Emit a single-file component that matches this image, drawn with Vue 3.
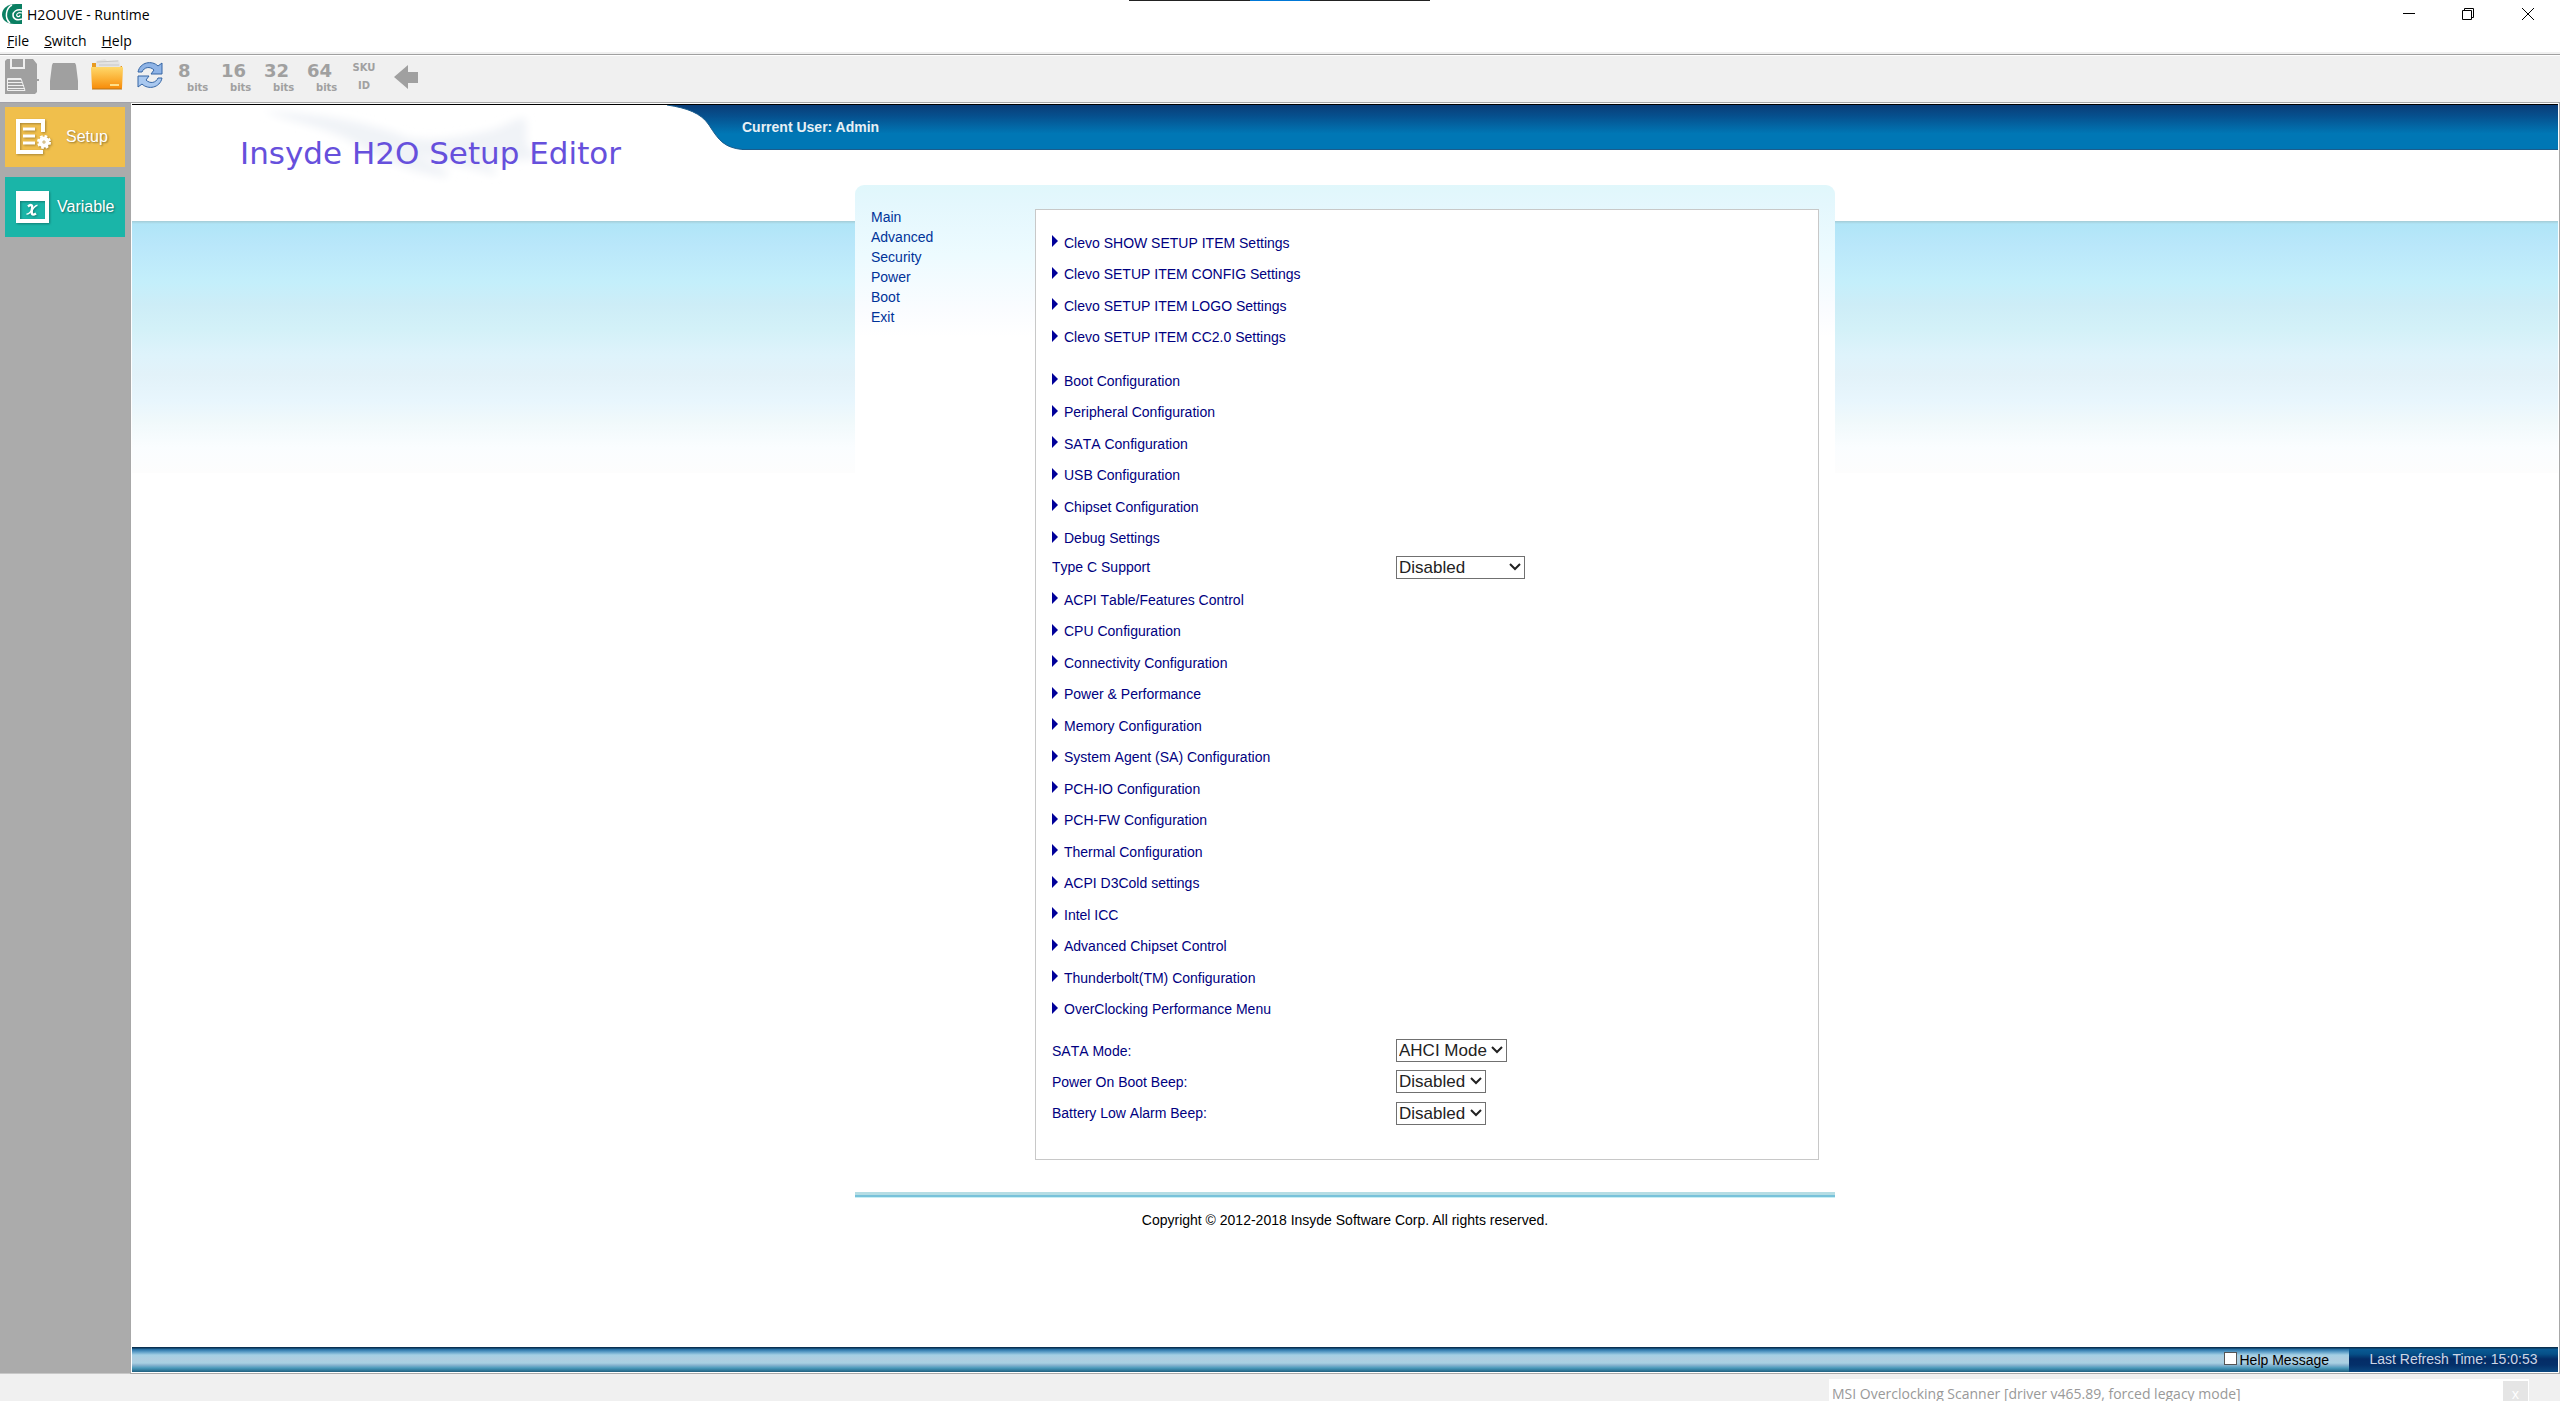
<script setup>
import { ref } from 'vue'

const menus = ['File', 'Switch', 'Help']
const bitTools = ['8', '16', '32', '64']
const pages = ['Main', 'Advanced', 'Security', 'Power', 'Boot', 'Exit']

const clevoItems = [
  'Clevo SHOW SETUP ITEM Settings',
  'Clevo SETUP ITEM CONFIG Settings',
  'Clevo SETUP ITEM LOGO Settings',
  'Clevo SETUP ITEM CC2.0 Settings',
]
const configItems = [
  'Boot Configuration',
  'Peripheral Configuration',
  'SATA Configuration',
  'USB Configuration',
  'Chipset Configuration',
  'Debug Settings',
]
const platformItems = [
  'ACPI Table/Features Control',
  'CPU Configuration',
  'Connectivity Configuration',
  'Power & Performance',
  'Memory Configuration',
  'System Agent (SA) Configuration',
  'PCH-IO Configuration',
  'PCH-FW Configuration',
  'Thermal Configuration',
  'ACPI D3Cold settings',
  'Intel ICC',
  'Advanced Chipset Control',
  'Thunderbolt(TM) Configuration',
  'OverClocking Performance Menu',
]

const typeC = ref('Disabled')
const options = ref([
  { id: 'sata-mode', label: 'SATA Mode:', value: 'AHCI Mode', choices: ['AHCI Mode'], size: 'mid' },
  { id: 'boot-beep', label: 'Power On Boot Beep:', value: 'Disabled', choices: ['Disabled', 'Enabled'], size: 'small' },
  { id: 'battery-beep', label: 'Battery Low Alarm Beep:', value: 'Disabled', choices: ['Disabled', 'Enabled'], size: 'small' },
])
const helpMessage = ref(false)
</script>

<template>
  <div class="window">
    <div class="top-tab"><i></i></div>

    <header class="titlebar">
      <svg class="app-icon" viewBox="0 0 20 20" aria-hidden="true">
        <path d="M20 0H14C5 0 0 5 0 10.500C0 16 5 20 12 20H20Z" fill="#0a7f62" />
        <path d="M10 1C4 4 2 14 8 19" fill="none" stroke="#fff" stroke-width="1.500" />
        <path d="M20 6C14 5 11 8 11 11C11 15 15 17 20 15" fill="none" stroke="#fff" stroke-width="1.500" />
        <path d="M20 9C16 8 14 10 15 12C16 13 18 13 18 11" fill="none" stroke="#fff" stroke-width="1.200" />
      </svg>
      <span class="app-title">H2OUVE - Runtime</span>
      <div class="window-controls">
        <button aria-label="Minimize"><svg viewBox="0 0 12 12"><path d="M0 5.500H12" /></svg></button>
        <button aria-label="Restore"><svg viewBox="0 0 12 12"><path d="M.5 2.500H9.500V11.500H.5ZM2.500 2.500V.5H11.500V9.500H9.500" /></svg></button>
        <button aria-label="Close"><svg viewBox="0 0 12 12"><path d="M0 0L12 12M12 0L0 12" /></svg></button>
      </div>
    </header>

    <nav class="menubar">
      <button v-for="m in menus" :key="m"><u>{{ m[0] }}</u>{{ m.slice(1) }}</button>
    </nav>

    <div class="toolbar">
      <button class="tool tool-save" aria-label="Save">
        <svg viewBox="0 0 34 35" width="34" height="35">
          <path d="M2 0H28L32 5V20H34V22H32V33L30 35H0V2Z" fill="#a0a0a0" />
          <path d="M7 0H11V8H18V0H20V10H5V0Z" fill="#f0f0f0" />
          <path d="M7 0H11V8H7ZM13 0H18V8H13Z" fill="#a0a0a0" />
          <path d="M3 20H16V21H3ZM3 23H17V24H3ZM3 26H19V27H3ZM3 29H20V30H3Z" fill="#f0f0f0" />
          <path d="M2.500 19.500H16L20 31.500H2.500Z" fill="none" stroke="#f0f0f0" />
        </svg>
      </button>
      <button class="tool tool-drive" aria-label="Load from flash">
        <svg viewBox="0 0 28 27" width="28" height="27"><path d="M3 0H25L26 2L28 18V27H0V18L2 2Z" fill="#a0a0a0" /></svg>
      </button>
      <button class="tool tool-open" aria-label="Open file">
        <svg viewBox="0 0 32 31" width="32" height="31">
          <defs>
            <linearGradient id="folder" x1="0" y1="0" x2="0" y2="1">
              <stop offset="0" stop-color="#ffd86a" />
              <stop offset=".55" stop-color="#fbb034" />
              <stop offset="1" stop-color="#f78a08" />
            </linearGradient>
          </defs>
          <path d="M1 4H7L9 7H31V12H1Z" fill="#e89a20" />
          <path d="M5 2L14 0L16 2L28 1L30 9H5Z" fill="#e4e4e4" />
          <path d="M6 3L27 2M8 6H28" stroke="#c8c8c8" />
          <path d="M0 9Q0 8 1 8H31Q32 8 32 9L31 29Q31 30 30 30H2Q1 30 1 29Z" fill="url(#folder)" />
          <path d="M1 30H31" stroke="#b87418" />
          <path d="M19 26H28" stroke="#ffe08a" stroke-width="2" />
        </svg>
      </button>
      <button class="tool tool-refresh" aria-label="Refresh">
        <svg viewBox="0 0 26 26" width="26" height="26">
          <path d="M1 10C3 0 15-2 21 4L25 1V12H14L17 8C13 4 7 5 5 10Z" fill="#8fb4e6" stroke="#3465a4" />
          <path d="M25 16C23 26 11 28 5 22L1 25V14H12L9 18C13 22 19 21 21 16Z" fill="#a9c8ef" stroke="#3465a4" />
        </svg>
      </button>
      <button v-for="b in bitTools" :key="b" class="tool tool-bits">
        <b>{{ b }}</b><small>bits</small>
      </button>
      <button class="tool tool-sku"><span>SKU</span><span>ID</span></button>
      <button class="tool tool-back" aria-label="Back">
        <svg viewBox="0 0 24 24" width="24" height="24"><path d="M0 12L14 0V7H24V18H14V24Z" fill="#a0a0a0" /></svg>
      </button>
    </div>

    <div class="body">
      <aside class="side">
        <button class="side-btn setup">
          <svg viewBox="0 0 36 36" width="36" height="36">
            <path d="M27 13V2H2V33H27" fill="none" stroke="#fff" stroke-width="4" />
            <path d="M7 10H19M7 17H19M7 24H19" stroke="#fff" stroke-width="3" />
            <circle cx="28" cy="23" r="3.500" fill="none" stroke="#fff" stroke-width="4" />
            <circle cx="28" cy="23" r="6" fill="none" stroke="#fff" stroke-width="2" stroke-dasharray="2.700 2" />
            <circle cx="28" cy="23" r=".8" fill="#fff" />
          </svg>
          <span>Setup</span>
        </button>
        <button class="side-btn variable">
          <svg viewBox="0 0 36 36" width="36" height="36">
            <path d="M0 2H33V34H0ZM4 12V30H29V12Z" fill="#fff" fill-rule="evenodd" />
            <path d="M12 17.500C15 15 17 16 16 20C15 25 16 27 20 24.500" fill="none" stroke="#fff" stroke-width="2.500" />
            <path d="M21.500 16.500C18 15 15 26 10.500 25" fill="none" stroke="#fff" stroke-width="1.500" />
          </svg>
          <span>Variable</span>
        </button>
      </aside>

      <div class="web">
        <div class="banner">
          <div class="brand">
            <svg class="splash" viewBox="0 0 300 80" aria-hidden="true">
              <defs><filter id="soft"><feGaussianBlur stdDeviation="4" /></filter></defs>
              <g filter="url(#soft)" fill="#f0f3f7">
                <path d="M8 6C60 8 110 16 150 32C180 38 210 30 232 26C250 22 262 10 270 14C272 30 264 44 285 52C262 58 235 54 222 54C238 62 244 66 238 70C212 62 180 54 160 50C186 62 198 68 190 72C160 70 120 52 95 36C65 20 30 16 8 6Z" />
              </g>
            </svg>
            <h1>Insyde H2O Setup Editor</h1>
          </div>
          <svg class="curve" viewBox="0 0 80 45" width="80" height="45" aria-hidden="true">
            <defs>
              <linearGradient id="bar" x1="0" y1="0" x2="0" y2="1">
                <stop offset="0" stop-color="#0a3d77" />
                <stop offset=".25" stop-color="#06508e" />
                <stop offset=".65" stop-color="#0077b5" />
                <stop offset="1" stop-color="#0077b5" />
              </linearGradient>
            </defs>
            <path d="M0 0C20 3 34 8 42 20C52 36 58 43 76 44.500H80V0Z" fill="url(#bar)" />
            <path d="M0 0C20 3 34 8 42 20C52 36 58 43 76 44.500H80" fill="none" stroke="#1b5c8c" />
          </svg>
          <div class="user-bar">Current User: Admin</div>
        </div>

        <main class="panel">
          <nav class="pages">
            <a v-for="p in pages" :key="p" href="#">{{ p }}</a>
          </nav>

          <section class="settings">
            <ul class="links four">
              <li v-for="t in clevoItems" :key="t">
                <svg viewBox="0 0 6 12" width="6" height="12"><path d="M0 0L6 6L0 12Z" /></svg><a href="#">{{ t }}</a>
              </li>
            </ul>
            <ul class="links six">
              <li v-for="t in configItems" :key="t">
                <svg viewBox="0 0 6 12" width="6" height="12"><path d="M0 0L6 6L0 12Z" /></svg><a href="#">{{ t }}</a>
              </li>
            </ul>
            <div class="option type-c">
              <label for="type-c">Type C Support</label>
              <span class="select large">
                <select id="type-c" v-model="typeC"><option>Disabled</option><option>Enabled</option></select>
                <svg viewBox="0 0 12 8" width="12" height="8"><path d="M1 1L6 6L11 1" /></svg>
              </span>
            </div>
            <ul class="links fourteen">
              <li v-for="t in platformItems" :key="t">
                <svg viewBox="0 0 6 12" width="6" height="12"><path d="M0 0L6 6L0 12Z" /></svg><a href="#">{{ t }}</a>
              </li>
            </ul>
            <div class="options">
              <div v-for="o in options" :key="o.id" class="option">
                <label :for="o.id">{{ o.label }}</label>
                <span class="select" :class="o.size">
                  <select :id="o.id" v-model="o.value"><option v-for="c in o.choices" :key="c">{{ c }}</option></select>
                  <svg viewBox="0 0 12 8" width="12" height="8"><path d="M1 1L6 6L11 1" /></svg>
                </span>
              </div>
            </div>
          </section>
        </main>

        <p class="copyright">Copyright © 2012-2018 Insyde Software Corp. All rights reserved.</p>

        <footer class="status">
          <label class="help"><input v-model="helpMessage" type="checkbox" />Help Message</label>
          <div class="refresh-time">Last Refresh Time: 15:0:53</div>
        </footer>
      </div>
    </div>

    <div class="desktop">
      <div class="ghost">
        <span>MSI Overclocking Scanner [driver v465.89, forced legacy mode]</span>
        <button aria-label="Close scanner">x</button>
      </div>
    </div>
  </div>
</template>

<style>
body {
  margin: 0;
  background: #f0f0f0;
}
</style>

<style scoped>
.window {
  position: relative;
  display: flex;
  flex-direction: column;
  height: 100vh;
  overflow: hidden;
  background: #f0f0f0;
  font-family: "Liberation Sans", Arial, sans-serif;
  color: #000;
}
button {
  margin: 0;
  padding: 0;
  border: 0;
  background: none;
  font: inherit;
  color: inherit;
}
.top-tab {
  position: absolute;
  top: 0;
  left: 50%;
  width: 301px;
  height: 1px;
  margin-left: -151px;
  background: #222;
}
.top-tab i {
  display: block;
  width: 60px;
  height: 1px;
  margin: 0 auto;
  background: #0078d7;
}

/* Title bar and menus */
.titlebar {
  display: flex;
  align-items: center;
  height: 28px;
  padding-left: 2px;
  background: #fff;
  font-family: "Open Sans", "Noto Sans", sans-serif;
  font-size: 14px;
}
.app-icon {
  width: 20px;
  height: 20px;
  margin-right: 5px;
}
.window-controls {
  display: flex;
  margin-left: auto;
}
.window-controls button {
  display: flex;
  align-items: center;
  justify-content: center;
  width: 58px;
  height: 28px;
}
.window-controls button:nth-child(2) {
  width: 60px;
}
.window-controls button:last-child {
  width: 60px;
  margin-right: 2px;
}
.window-controls svg {
  width: 12px;
  height: 12px;
  fill: none;
  stroke: #000;
}
.menubar {
  display: flex;
  gap: 15px;
  height: 22px;
  padding: 2px 0 0 7px;
  border-bottom: 2px solid #f0f0f0;
  background: #fff;
  font-family: "Open Sans", "Noto Sans", sans-serif;
  font-size: 14px;
  line-height: 22px;
}

/* Toolbar */
.toolbar {
  display: flex;
  align-items: center;
  height: 43px;
  padding: 0 0 4px 5px;
  border-top: 1px solid #a0a0a0;
  border-bottom: 1px solid #a0a0a8;
  box-shadow: inset 0 1px #fff;
  color: #a0a0a0;
}
.tool {
  display: flex;
  flex-shrink: 0;
}
.tool-save { width: 45px; }
.tool-drive { width: 41px; }
.tool-open {
  width: 46px;
  padding-bottom: 4px;
}
.tool-refresh {
  width: 41px;
  padding-bottom: 4px;
}
.tool-bits {
  flex-direction: column;
  width: 43px;
  padding-top: 4px;
  font-family: "DejaVu Sans", sans-serif;
  text-align: left;
}
.tool-bits b {
  height: 18px;
  font-size: 18px;
  line-height: 18px;
}
.tool-bits small {
  padding-left: 9px;
  font-size: 10px;
  font-weight: bold;
  line-height: 16px;
}
.tool-sku {
  flex-direction: column;
  align-items: center;
  width: 28px;
  margin-right: 16px;
  font-family: "DejaVu Sans", sans-serif;
  font-size: 10px;
  font-weight: bold;
  line-height: 18px;
}

/* Sidebar */
.body {
  display: flex;
  flex: 1;
  min-height: 0;
}
.side {
  display: flex;
  flex-direction: column;
  gap: 10px;
  width: 120px;
  padding: 4px 6px 0 5px;
  border-bottom: 1px solid #c8c8c8;
  background: #ababab;
}
.side-btn {
  display: flex;
  align-items: center;
  height: 60px;
  padding-left: 11px;
  color: #fff;
  font-size: 16px;
  text-shadow: 1px 1px 2px rgba(0, 0, 0, 0.4);
}
.side-btn svg {
  flex-shrink: 0;
  filter: drop-shadow(1px 1px 1px rgba(0, 0, 0, 0.3));
}
.setup {
  gap: 14px;
  background: #f0bf4c;
}
.variable {
  gap: 5px;
  background: #1ab5a8;
}

/* Setup page */
.web {
  display: flex;
  flex: 1;
  flex-direction: column;
  min-width: 0;
  margin: 0 1px 1px 0;
  border: 1px solid #fff;
  outline: 1px solid #a8a8a8;
  background:
    linear-gradient(#000, #000) 0 0 / 100% 1px no-repeat,
    linear-gradient(#a4ccd6, #b0e5f7 3px, #b9e7fa 24px, #c4effb 62px, #cdedf7 84px, #d3f1f8 108px, #def3fb 134px, #e2f2f9 154px, #e8f6fd 180px, #f0f9fb 200px, #fafdff 226px, #fdfdfd 252px) 0 117px / 100% 252px no-repeat,
    #fff;
}
.banner {
  display: flex;
  height: 80px;
  padding-top: 1px;
}
.brand {
  position: relative;
  width: 535px;
}
.splash {
  position: absolute;
  top: 0;
  left: 124px;
  width: 300px;
  height: 80px;
}
h1 {
  position: relative;
  margin: 28px 0 0 108px;
  color: #6650dc;
  font: 31px/40px "DejaVu Sans", sans-serif;
  white-space: nowrap;
}
.user-bar {
  flex: 1;
  box-sizing: border-box;
  height: 45px;
  border-bottom: 1px solid #1b5c8c;
  background: linear-gradient(#0a3d77, #06508e 25%, #0077b5 65%, #0077b5);
  color: #e8f0f5;
  font-size: 14px;
  font-weight: bold;
  line-height: 44px;
}
.curve {
  margin-right: -5px;
}
.panel {
  display: flex;
  align-items: flex-start;
  box-sizing: border-box;
  width: 980px;
  margin: 0 auto;
  padding: 22px 16px 32px;
  border-radius: 9px 9px 0 0;
  background: linear-gradient(#e0f7fb, #e4f7fd 20px, #edfbff 70px, #fafcff 125px, #fff 152px);
}
.pages {
  display: flex;
  flex-direction: column;
  width: 164px;
}
.pages a {
  color: #039;
  font-size: 14px;
  line-height: 20px;
  text-decoration: none;
}
.settings {
  flex: 1;
  margin-top: 2px;
  padding: 17px 16px 30px;
  border: 1px solid #c8c8c8;
  background: #fff;
  color: #000080;
  font-size: 14px;
  font-kerning: none;
}
.links {
  display: grid;
  grid-auto-rows: 1fr;
  margin: 0;
  padding: 0;
  list-style: none;
}
.links li {
  display: flex;
  align-items: center;
  gap: 6px;
}
.links svg {
  margin-bottom: 3px;
  fill: #000099;
}
.links a {
  color: inherit;
  text-decoration: none;
}
.four {
  height: 126px;
  margin-bottom: 12px;
}
.six { height: 189px; }
.fourteen {
  height: 441px;
  margin-bottom: 10px;
}
.options {
  display: grid;
  grid-auto-rows: 1fr;
  height: 94px;
}
.option {
  display: flex;
  align-items: center;
}
.option label {
  width: 344px;
}
.type-c {
  height: 26px;
  margin-bottom: 4px;
}
.select {
  position: relative;
  height: 23px;
}
.select select {
  box-sizing: border-box;
  width: 100%;
  height: 23px;
  padding: 0 2px;
  border: 1px solid #707070;
  border-radius: 0;
  appearance: none;
  background: #fff;
  color: #222;
  font: 17px/21px "Liberation Sans", Arial, sans-serif;
}
.select svg {
  position: absolute;
  top: 7px;
  right: 4px;
  fill: none;
  stroke: #222;
  stroke-width: 2;
  pointer-events: none;
}
.large { width: 129px; }
.mid { width: 111px; }
.small { width: 90px; }
.copyright {
  box-sizing: border-box;
  width: 980px;
  margin: 0 auto;
  padding-top: 18px;
  background: linear-gradient(#b5dde4 3px, #78c2da 3px, #78c2da 5px, #c8eef4 5px) 0 0 / 100% 6px no-repeat;
  font-size: 14px;
  line-height: 20px;
  text-align: center;
}

/* Status bar */
.status {
  display: flex;
  justify-content: flex-end;
  height: 25px;
  margin-top: auto;
  background: linear-gradient(#0a3050 1px, #1f6aa0 2px, #5f9fc8 5px, #a4cfe4 8px, #afcde0 12px, #a8d0e2 16px, #8ab4d0 18px, #4a9abb 21px, #206080 25px);
}
.help {
  display: flex;
  align-items: center;
  margin-right: 20px;
  font-size: 14px;
}
.help input {
  width: 13px;
  height: 13px;
  margin: 0 3px 3px 0;
  border: 1px solid #555;
  appearance: none;
  background: #fff;
}
.refresh-time {
  width: 209px;
  background: linear-gradient(#0a3050 1px, #0a5a94 2px, #065088 7px, #042c66 12px, #04306a 18px, #0a4880 25px);
  color: #ccd6e6;
  font-size: 14px;
  line-height: 24px;
  text-align: center;
}

/* Background window below the editor */
.desktop {
  display: flex;
  justify-content: flex-end;
  height: 22px;
  padding: 5px 31px 0 0;
}
.ghost {
  display: flex;
  justify-content: space-between;
  width: 697px;
  padding: 2px 0 0 3px;
  overflow: hidden;
  background: #fff;
  color: #999;
  font: 14px/26px "Open Sans", "Noto Sans", sans-serif;
  white-space: nowrap;
}
.ghost button {
  width: 25px;
  height: 26px;
  margin-right: 1px;
  background: #e5e5e5;
  color: #fff;
}
</style>
